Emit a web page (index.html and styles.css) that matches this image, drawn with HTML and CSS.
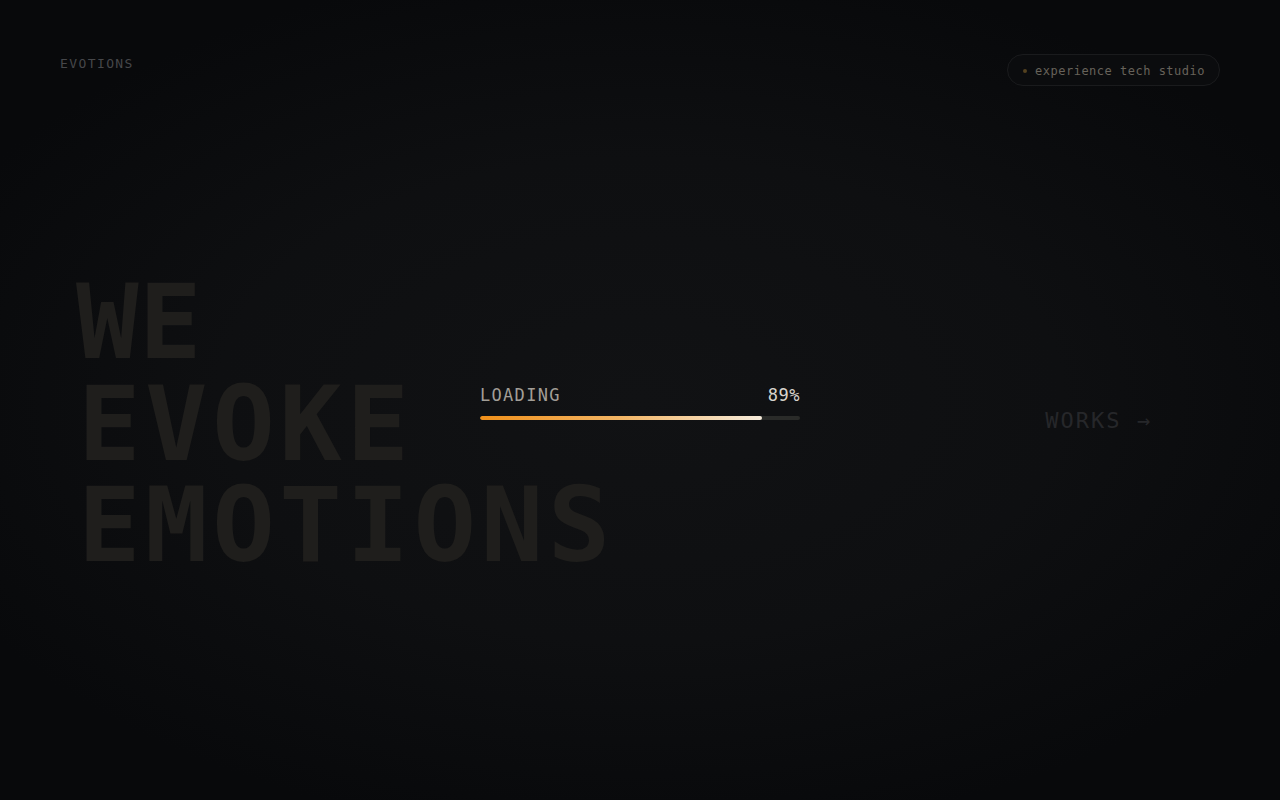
FILE: index.html
```html
<!DOCTYPE html>
<html lang="en">
<head>
<meta charset="utf-8">
<title>Evotions</title>
<link rel="stylesheet" href="styles.css">
</head>
<body>
<div class="page">
  <header class="header">
    <div class="logo">EVOTIONS</div>
    <div class="pill"><span class="dot"></span><span class="pill-text">experience tech studio</span></div>
  </header>
  <main class="main">
    <h1 class="hero">
      <span class="line line-we">WE</span>
      <span class="line">EVOKE</span>
      <span class="line">EMOTIONS</span>
    </h1>
    <a class="works" href="#">WORKS <span class="arrow">→</span></a>
  </main>
  <div class="loader">
    <div class="loader-box">
      <div class="loader-row">
        <span class="loader-label">LOADING</span>
        <span class="loader-pct">89%</span>
      </div>
      <div class="track"><div class="fill" style="width: 88%"></div></div>
    </div>
  </div>
</div>
</body>
</html>
```

FILE: styles.css
```css
* { box-sizing: border-box; }
html, body {
  margin: 0;
  padding: 0;
  width: 1280px;
  height: 800px;
  overflow: hidden;
  background: #0a0b0d;
}
.page {
  position: relative;
  width: 1280px;
  height: 800px;
  background: radial-gradient(ellipse 60% 55% at 50% 50%, #111214 0%, #0e0f11 55%, #08090b 100%);
  font-family: "DejaVu Sans Mono", "Liberation Mono", monospace;
  display: flex;
  flex-direction: column;
}
.header {
  display: flex;
  justify-content: space-between;
  align-items: flex-start;
  padding: 54px 60px 0 60px;
}
.logo {
  font-size: 13px;
  line-height: 16px;
  letter-spacing: 1.4px;
  color: #46474a;
  padding-top: 2px;
}
.pill {
  display: flex;
  align-items: center;
  gap: 8px;
  height: 32px;
  padding: 1px 14px 0 15px;
  border: 1px solid #1a1b1d;
  border-radius: 16px;
  background: #0b0c0e;
}
.dot {
  width: 4px;
  height: 4px;
  border-radius: 50%;
  background: #54421f;
}
.pill-text {
  font-size: 12px;
  letter-spacing: 0.5px;
  color: #67625a;
}
.main {
  flex: 1;
  display: flex;
  justify-content: space-between;
  align-items: flex-start;
  padding: 0 130px 0 78px;
}
.hero {
  margin: 186px 0 0 0;
  font-size: 104px;
  line-height: 101.5px;
  font-weight: bold;
  letter-spacing: 4.5px;
  color: #1f1e1c;
  display: flex;
  flex-direction: column;
}
.line { display: block; white-space: nowrap; }
.line-we {
  letter-spacing: 0.5px;
  margin-left: -2px;
}
.works {
  margin-top: 322px;
  font-size: 22px;
  letter-spacing: 2px;
  color: #26272a;
  text-decoration: none;
}
.arrow { letter-spacing: 0; }
.loader {
  position: absolute;
  inset: 0;
  display: flex;
  align-items: center;
  justify-content: center;
}
.loader-box {
  width: 320px;
  margin-top: 4px;
}
.loader-row {
  display: flex;
  justify-content: space-between;
  align-items: baseline;
  font-size: 17px;
  line-height: 20px;
  letter-spacing: 1.3px;
}
.loader-label { color: #a29e97; }
.loader-pct { color: #d8d4cd; letter-spacing: 0.5px; }
.track {
  margin-top: 11px;
  height: 4px;
  background: #2a2b29;
  border-radius: 2px;
  overflow: hidden;
}
.fill {
  height: 100%;
  border-radius: 2px;
  background: linear-gradient(90deg, #f0901a 0%, #f2b565 50%, #f6ecdc 100%);
}
```
